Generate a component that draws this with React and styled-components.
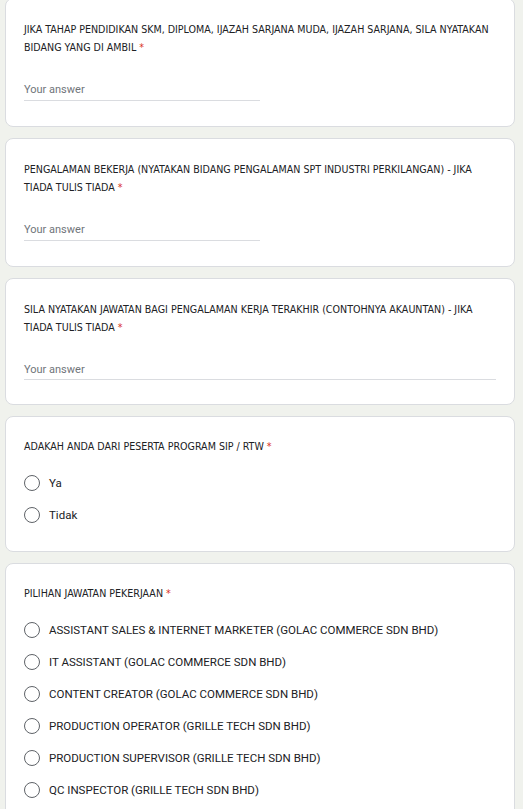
import styled, { createGlobalStyle } from 'styled-components';

const GlobalStyle = createGlobalStyle`
  html, body {
    margin: 0;
    padding: 0;
    background: #f0f2ed;
  }
`;

const Page = styled.main`
  display: flex;
  flex-direction: column;
  gap: 11px;
  width: 510px;
  margin: -2px 0 0 5px;
  font-family: Roboto, 'Liberation Sans', sans-serif;
`;

const Card = styled.section`
  display: flex;
  flex-direction: column;
  background: #fff;
  border: 1px solid #dadce0;
  border-radius: 8px;
  padding: ${(p) => (p.$radio ? '20px 18px 20px' : `21px 18px ${p.$full ? 24 : 25}px`)};
`;

const Title = styled.h2`
  margin: 0;
  font-family: 'Liberation Sans Narrow', 'DejaVu Sans Condensed', 'Liberation Sans', sans-serif;
  font-weight: 400;
  font-size: 10.6px;
  line-height: 18px;
  color: #202124;
  text-transform: uppercase;
`;

const Star = styled.span`
  color: #d93025;
  margin-left: 3px;
`;

const Answer = styled.div`
  margin-top: 27px;
  width: ${(p) => (p.$full ? '100%' : '236px')};
  padding-bottom: ${(p) => (p.$full ? 2 : 3)}px;
  border-bottom: 1px solid #dadce0;
  font-size: 11px;
  line-height: 14px;
  color: #70757a;
`;

const Options = styled.div`
  display: flex;
  flex-direction: column;
  margin-top: 12px;
`;

const Option = styled.label`
  display: flex;
  align-items: center;
  gap: 9px;
  height: 32px;
  font-size: 11.5px;
  color: #202124;
`;

const Circle = styled.span`
  box-sizing: border-box;
  width: 16px;
  height: 16px;
  border-radius: 50%;
  border: 1.5px solid #5f6368;
  flex-shrink: 0;
`;

const textQuestions = [
  {
    title: 'Jika tahap pendidikan SKM, Diploma, Ijazah Sarjana Muda, Ijazah Sarjana, sila nyatakan bidang yang di ambil',
  },
  {
    title: 'Pengalaman bekerja (nyatakan bidang pengalaman spt industri perkilangan) - jika tiada tulis tiada',
  },
  {
    title: 'Sila nyatakan jawatan bagi pengalaman kerja terakhir (contohnya akauntan) - jika tiada tulis tiada',
    full: true,
  },
];

const radioQuestions = [
  {
    title: 'Adakah anda dari peserta program SIP / RTW',
    options: ['Ya', 'Tidak'],
  },
  {
    title: 'Pilihan jawatan pekerjaan',
    options: [
      'ASSISTANT SALES & INTERNET MARKETER (GOLAC COMMERCE SDN BHD)',
      'IT ASSISTANT (GOLAC COMMERCE SDN BHD)',
      'CONTENT CREATOR (GOLAC COMMERCE SDN BHD)',
      'PRODUCTION OPERATOR (GRILLE TECH SDN BHD)',
      'PRODUCTION SUPERVISOR (GRILLE TECH SDN BHD)',
      'QC INSPECTOR (GRILLE TECH SDN BHD)',
    ],
  },
];

function App() {
  return (
    <>
      <GlobalStyle />
      <Page>
        {textQuestions.map((q) => (
          <Card key={q.title} $full={q.full}>
            <Title>
              {q.title}
              <Star>*</Star>
            </Title>
            <Answer $full={q.full}>Your answer</Answer>
          </Card>
        ))}
        {radioQuestions.map((q) => (
          <Card key={q.title} $radio>
            <Title>
              {q.title}
              <Star>*</Star>
            </Title>
            <Options>
              {q.options.map((o) => (
                <Option key={o}>
                  <Circle />
                  {o}
                </Option>
              ))}
            </Options>
          </Card>
        ))}
      </Page>
    </>
  );
}

export default App;
